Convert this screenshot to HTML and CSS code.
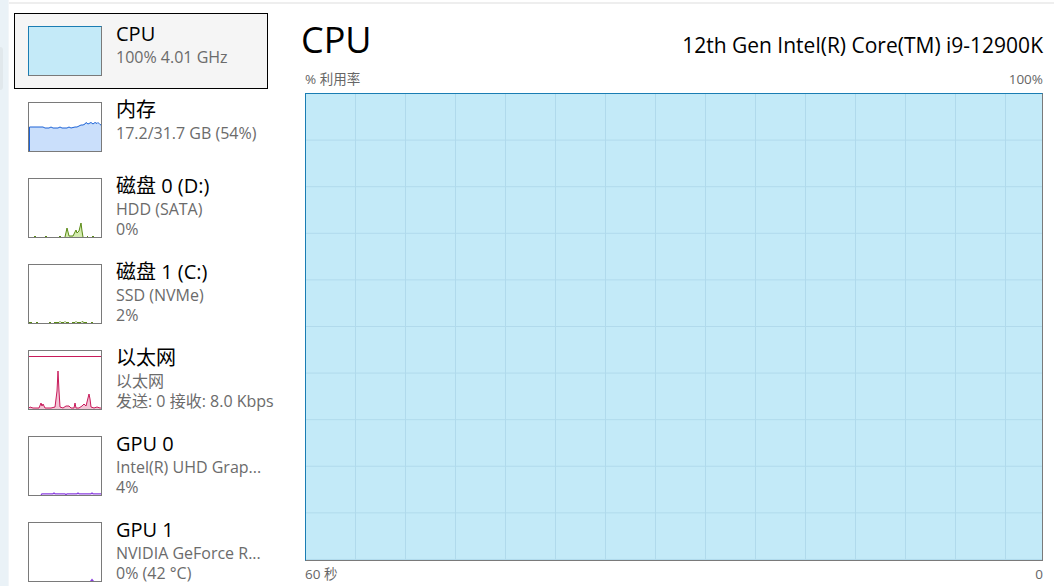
FILE: index.html
```html
<!DOCTYPE html>
<html lang="zh-CN">
<head>
<meta charset="utf-8">
<title>性能 - CPU</title>
<link rel="stylesheet" href="styles.css">
</head>
<body>
<div class="app">
  <div class="rail"><div class="rail-tab"></div></div>
  <div class="main">
    <nav class="sidebar">
      <div class="item selected">
        <div class="thumb thumb-short thumb-cpu"></div>
        <div class="info">
          <div class="title">CPU</div>
          <div class="sub">100% 4.01 GHz</div>
        </div>
      </div>
      <div class="item">
        <div class="thumb thumb-short thumb-mem">
          <svg viewBox="0 0 72 48" width="72" height="48" preserveAspectRatio="none">
            <path class="mem-fill" d="M0,48 L0,24 L14,24 L16,25 L20,25 L22,24 L24,25 L29,25 L31,24 L33,25 L38,25 L40,24 L42,25 L46,24 L48,24 L50,23 L52,22 L54,22 L56,21 L57,19.5 L59,21 L61,20 L62,19.5 L64,21 L66,19.5 L68,20.5 L69,19.5 L71,21.5 L72,22 L72,48 Z"/>
            <path class="mem-line" d="M0.5,48 L0.5,24 L14,24 L16,25 L20,25 L22,24 L24,25 L29,25 L31,24 L33,25 L38,25 L40,24 L42,25 L46,24 L48,24 L50,23 L52,22 L54,22 L56,21 L57,19.5 L59,21 L61,20 L62,19.5 L64,21 L66,19.5 L68,20.5 L69,19.5 L71,21.5 L72,22"/>
          </svg>
        </div>
        <div class="info">
          <div class="title">内存</div>
          <div class="sub">17.2/31.7 GB (54%)</div>
        </div>
      </div>
      <div class="item">
        <div class="thumb thumb-tall">
          <svg viewBox="0 0 72 58" width="72" height="58">
            <path class="disk-fill" d="M36,58 L38,49 L40,57 L44,57 L46,53 L47,51 L48,54 L50,52 L52,44 L53,52 L54,58 Z"/>
            <path class="disk-line" d="M36,58 L38,49 L40,57 L44,57 L46,53 L47,51 L48,54 L50,52 L52,44 L53,52 L54,58"/>
            <path class="disk-line" d="M5,57.5 L7,57.5 M16,57.5 L18,57.5 M30,57.5 L32,57.5 M58,57.5 L59,57.5 M63,57.5 L65,57.5"/>
          </svg>
        </div>
        <div class="info">
          <div class="title">磁盘 0 (D:)</div>
          <div class="sub">HDD (SATA)</div>
          <div class="sub">0%</div>
        </div>
      </div>
      <div class="item">
        <div class="thumb thumb-tall">
          <svg viewBox="0 0 72 58" width="72" height="58">
            <path class="disk-line" d="M0,57.5 L3,57.5 M7,57.5 L9,57.5 M20,57.5 L22,57.5 M25,57.5 L30,57.5 L31,56.5 L32,57.5 L35,57.5 L36,56.5 L37,57.5 L40,57.5 M43,57.5 L46,57.5 L47,56.5 L48,57.5 L52,57.5 L53,56.5 L55,57.5 L58,57.5 M62,57.5 L64,57.5"/>
          </svg>
        </div>
        <div class="info">
          <div class="title">磁盘 1 (C:)</div>
          <div class="sub">SSD (NVMe)</div>
          <div class="sub">2%</div>
        </div>
      </div>
      <div class="item">
        <div class="thumb thumb-tall">
          <svg viewBox="0 0 72 58" width="72" height="58">
            <path class="net-line" d="M0,5.5 L72,5.5"/>
            <path class="net-fill" d="M0,58 L1,56 L4,57 L10,57 L12,52 L13,55 L14,53 L16,57 L22,57 L26,56 L28,40 L29,20 L30,40 L31,56 L34,57 L37,55 L40,55 L42,57 L45,57 L46,52 L47,57 L50,57 L53,55 L55,53 L57,55 L59,47 L60,43 L61,48 L62,56 L65,57 L68,56 L71,57 L72,58 Z"/>
            <path class="net-line" d="M0,57 L1,56 L4,57 L10,57 L12,52 L13,55 L14,53 L16,57 L22,57 L26,56 L28,40 L29,20 L30,40 L31,56 L34,57 L37,55 L40,55 L42,57 L45,57 L46,52 L47,57 L50,57 L53,55 L55,53 L57,55 L59,47 L60,43 L61,48 L62,56 L65,57 L68,56 L71,57 L72,57"/>
          </svg>
        </div>
        <div class="info">
          <div class="title">以太网</div>
          <div class="sub">以太网</div>
          <div class="sub">发送: 0 接收: 8.0 Kbps</div>
        </div>
      </div>
      <div class="item">
        <div class="thumb thumb-tall">
          <svg viewBox="0 0 72 58" width="72" height="58">
            <path class="gpu-line" d="M12,58 L13,56.8 L24,56.8 L25,56 L26,56.8 L36,56.8 L37,57.8 L38,56.8 L48,56.8 L49,56 L50,56.8 L62,56.8 L63,56 L64,56.8 L72,56.8"/>
          </svg>
        </div>
        <div class="info">
          <div class="title">GPU 0</div>
          <div class="sub">Intel(R) UHD Grap...</div>
          <div class="sub">4%</div>
        </div>
      </div>
      <div class="item">
        <div class="thumb thumb-tall">
          <svg viewBox="0 0 72 58" width="72" height="58">
            <path class="gpu-fill" d="M61,58 L63,55.5 L65,58 Z"/>
          </svg>
        </div>
        <div class="info">
          <div class="title">GPU 1</div>
          <div class="sub">NVIDIA GeForce R...</div>
          <div class="sub">0% (42 °C)</div>
        </div>
      </div>
    </nav>
    <section class="content">
      <div class="header">
        <h1 class="big">CPU</h1>
        <div class="model">12th Gen Intel(R) Core(TM) i9-12900K</div>
      </div>
      <div class="axis axis-top"><span>% 利用率</span><span>100%</span></div>
      <div class="graph"></div>
      <div class="axis axis-bottom"><span>60 秒</span><span>0</span></div>
    </section>
  </div>
</div>
</body>
</html>
```
FILE: styles.css
```css
* { box-sizing: border-box; }
html, body { margin: 0; padding: 0; }
body {
  background: #ffffff;
  font-family: "Open Sans", "Noto Sans CJK SC", sans-serif;
  color: #000;
  overflow: hidden;
}
.app {
  display: flex;
  width: 1054px;
  height: 586px;
  overflow: hidden;
}
.rail {
  width: 9px;
  flex: none;
  background: #eaf2f7;
  border-right: 1px solid #f2f6f9;
  padding-top: 47px;
}
.rail-tab {
  width: 3px;
  height: 43px;
  background: #e1e8ec;
  border-radius: 0 3px 3px 0;
}
.main {
  flex: 1;
  display: flex;
  margin-top: 2px;
  border-top: 2px solid #eeeeee;
}
.sidebar {
  width: 281px;
  flex: none;
  padding: 9px 0 0 5px;
}
.item {
  width: 254px;
  display: flex;
  align-items: flex-start;
  gap: 14px;
  padding: 12px 13px;
  border: 1px solid transparent;
}
.item.selected {
  background: #f5f5f5;
  border-color: #000;
}
.thumb {
  width: 74px;
  flex: none;
  border: 1px solid #7a7a7a;
  background: #fff;
  overflow: hidden;
}
.thumb svg { display: block; }
.thumb-short { height: 50px; }
.thumb-tall { height: 60px; }
.thumb-cpu {
  background: #c4eaf8;
  border-top-color: #1a7db3;
  border-left-color: #1a7db3;
}
.mem-fill { fill: #cadffb; }
.mem-line { fill: none; stroke: #1d63d6; stroke-width: 1; }
.disk-fill { fill: #d3ebae; }
.disk-line { fill: none; stroke: #5a8a16; stroke-width: 1; }
.net-fill { fill: #f2c4d5; }
.net-line { fill: none; stroke: #c81b5b; stroke-width: 1; }
.gpu-line { fill: none; stroke: #8b3fe0; stroke-width: 1.2; }
.gpu-fill { fill: #8b3fe0; }
.info {
  margin: -5px 0 -6px;
  min-width: 0;
}
.title {
  font-size: 20px;
  line-height: 26px;
  color: #000;
  white-space: nowrap;
}
.sub {
  font-size: 16px;
  line-height: 20px;
  color: #6b6b6b;
  white-space: nowrap;
}
.content {
  flex: 1;
  padding: 14px 11px 0 15px;
  display: flex;
  flex-direction: column;
}
.header {
  display: flex;
  justify-content: space-between;
  align-items: baseline;
  height: 44px;
}
.big {
  margin: 0 0 0 -4px;
  font-size: 36px;
  line-height: 44px;
  font-weight: 400;
}
.model {
  font-size: 21px;
  line-height: 26px;
}
.axis {
  display: flex;
  justify-content: space-between;
  font-size: 13.5px;
  line-height: 18px;
  color: #666;
}
.axis-top { margin-top: 8px; }
.axis-bottom { margin-top: 4px; }
.graph {
  margin-top: 5px;
  height: 468px;
  border: 1px solid #7a7a7a;
  border-top-color: #1a7db3;
  border-left-color: #1a7db3;
  background-color: #c3eaf8;
  background-image:
    linear-gradient(to right, transparent 49px, #b0daec 49px, #b0daec 50px),
    linear-gradient(to bottom, transparent calc(100% - 1px), #b0daec calc(100% - 1px));
  background-size: 50px 100%, 100% 10%;
  background-repeat: repeat-x, repeat-y;
}
```
